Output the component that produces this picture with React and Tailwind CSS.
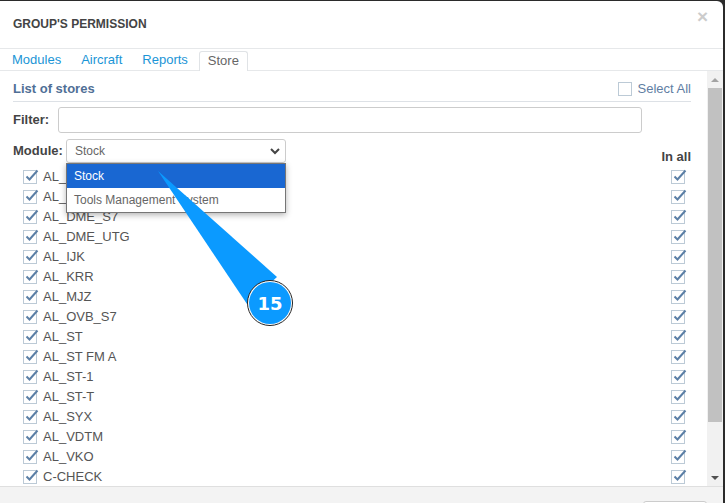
import React from 'react';

const stores = [
  'AL_AER', 'AL_DME', 'AL_DME_S7', 'AL_DME_UTG', 'AL_IJK', 'AL_KRR', 'AL_MJZ', 'AL_OVB_S7', 'AL_ST',
  'AL_ST FM A', 'AL_ST-1', 'AL_ST-T', 'AL_SYX', 'AL_VDTM', 'AL_VKO', 'C-CHECK',
];

function Check({ checked = true }) {
  return (
    <span className="relative block w-[14px] h-[14px] shrink-0 border border-[#bccad6] bg-white">
      {checked && (
        <svg className="absolute left-[1px] top-[-3px]" width="14" height="14" viewBox="0 0 14 14" fill="none">
          <path d="M1.5 8.5 L4.5 11.5 L12.5 2.5" stroke="#5b7fa6" strokeWidth="2" />
        </svg>
      )}
    </span>
  );
}

function Callout() {
  return (
    <div className="absolute left-[150px] top-[165px] w-[150px] h-[170px]">
      <svg className="absolute inset-0" width="150" height="170" viewBox="0 0 150 170">
        <path d="M8 6 L127 112 L97 139 Z" fill="#0b9aff" />
      </svg>
      <div className="absolute left-[97px] top-[115px] w-[46px] h-[46px] rounded-full bg-white border-[1.5px] border-[#222] p-[1px]">
        <div className="w-full h-full rounded-full bg-[#0b9aff] flex items-center justify-center text-white font-bold text-[18px] font-['DejaVu_Sans',sans-serif]">
          15
        </div>
      </div>
    </div>
  );
}

export default function App() {
  return (
    <div className="relative w-[725px] h-[503px] overflow-hidden bg-[#2b2b2b] font-['Liberation_Sans',sans-serif] text-[13px] text-[#444]">
      <div className="w-[723px] h-[502px] mt-[1px] bg-white rounded-tr-[6px] flex flex-col overflow-hidden">
        <div className="h-[47px] shrink-0 flex items-center justify-between pl-[13px] pr-[15px] pb-[1px]">
          <span className="text-[12px] font-bold text-[#444]">GROUP'S PERMISSION</span>
          <span className="text-[19px] font-bold leading-none text-[#ccc] mb-[16px]">×</span>
        </div>

        <div className="h-[23px] shrink-0 border-t border-b border-[#e6e8ea] flex items-end pl-[12px]">
          <a className="text-[#1b95d6] mr-[20px] mb-[1px]">Modules</a>
          <a className="text-[#1b95d6] mr-[20px] mb-[1px]">Aircraft</a>
          <a className="text-[#1b95d6] mr-[11px] mb-[1px]">Reports</a>
          <div className="h-[20px] w-[49px] mb-[-1px] pb-[2px] bg-white border border-b-0 border-[#e0e3e6] rounded-t-[3px] flex items-center justify-center text-[#666]">
            Store
          </div>
        </div>

        <div className="flex-1 min-h-0 flex">
          <div className="flex-1 min-w-0 overflow-hidden pl-[13px] pr-[16px]">
            <div className="h-[31px] flex items-center justify-between border-b border-[#dde1e6] pt-[5px]">
              <span className="font-bold text-[#4f6f96]">List of stores</span>
              <label className="flex items-center gap-[6px] text-[#5f7ea3]">
                <Check checked={false} />
                Select All
              </label>
            </div>

            <div className="flex items-center mt-[5px] h-[26px] pr-[49px]">
              <span className="w-[45px] font-bold">Filter:</span>
              <input className="flex-1 h-[26px] border border-[#ccc] rounded-[3px] bg-white" />
            </div>

            <div className="flex items-start justify-between mt-[6px] h-[28px]">
              <div className="flex items-center">
                <span className="w-[53px] font-bold">Module:</span>
                <div className="w-[220px] h-[24px] border border-[#ccc] rounded-[3px] flex items-center justify-between pl-[8px] pr-[3px] text-[12px] text-[#666]">
                  Stock
                  <svg width="14" height="14" viewBox="0 0 14 14" fill="none">
                    <path d="M3 5 L7 9 L11 5" stroke="#444" strokeWidth="2" />
                  </svg>
                </div>
              </div>
              <span className="font-bold mt-[8px]">In all</span>
            </div>

            <div className="flex flex-col">
              {stores.map((name) => (
                <div key={name} className="h-[20px] shrink-0 flex items-center justify-between pl-[10px] pr-[6px] text-[#555]">
                  <div className="flex items-center gap-[6px]">
                    <Check />
                    <span>{name}</span>
                  </div>
                  <Check />
                </div>
              ))}
            </div>
          </div>

          <div className="w-[16px] shrink-0 bg-[#f1f1f1] flex flex-col items-center">
            <div className="h-[17px] shrink-0 flex items-center justify-center">
              <span className="w-0 h-0 border-x-[4px] border-x-transparent border-b-[4px] border-b-[#a3a3a3]" />
            </div>
            <div className="w-[14px] h-[334px] shrink-0 bg-[#c1c1c1]" />
            <div className="flex-1" />
            <div className="h-[17px] shrink-0 flex items-center justify-center">
              <span className="w-0 h-0 border-x-[4px] border-x-transparent border-t-[4px] border-t-[#505050]" />
            </div>
          </div>
        </div>

        <div className="h-[17px] shrink-0 border-t border-[#dfdfdf] bg-[#f3f3f3] flex justify-end pr-[16px] pt-[14px]">
          <div className="w-[64px] h-[20px] shrink-0 bg-white border border-[#ccc] rounded-[3px]" />
        </div>
      </div>

      <div className="absolute left-[66px] top-[163px] w-[220px] h-[50px] bg-white border border-[#767676] shadow-[0_2px_6px_rgba(0,0,0,0.3)] text-[12px]">
        <div className="h-[24px] bg-[#1967d2] text-white flex items-center pl-[7px]">Stock</div>
        <div className="h-[24px] flex items-center pl-[7px] text-[#666]">Tools Management System</div>
      </div>

      <Callout />
    </div>
  );
}
